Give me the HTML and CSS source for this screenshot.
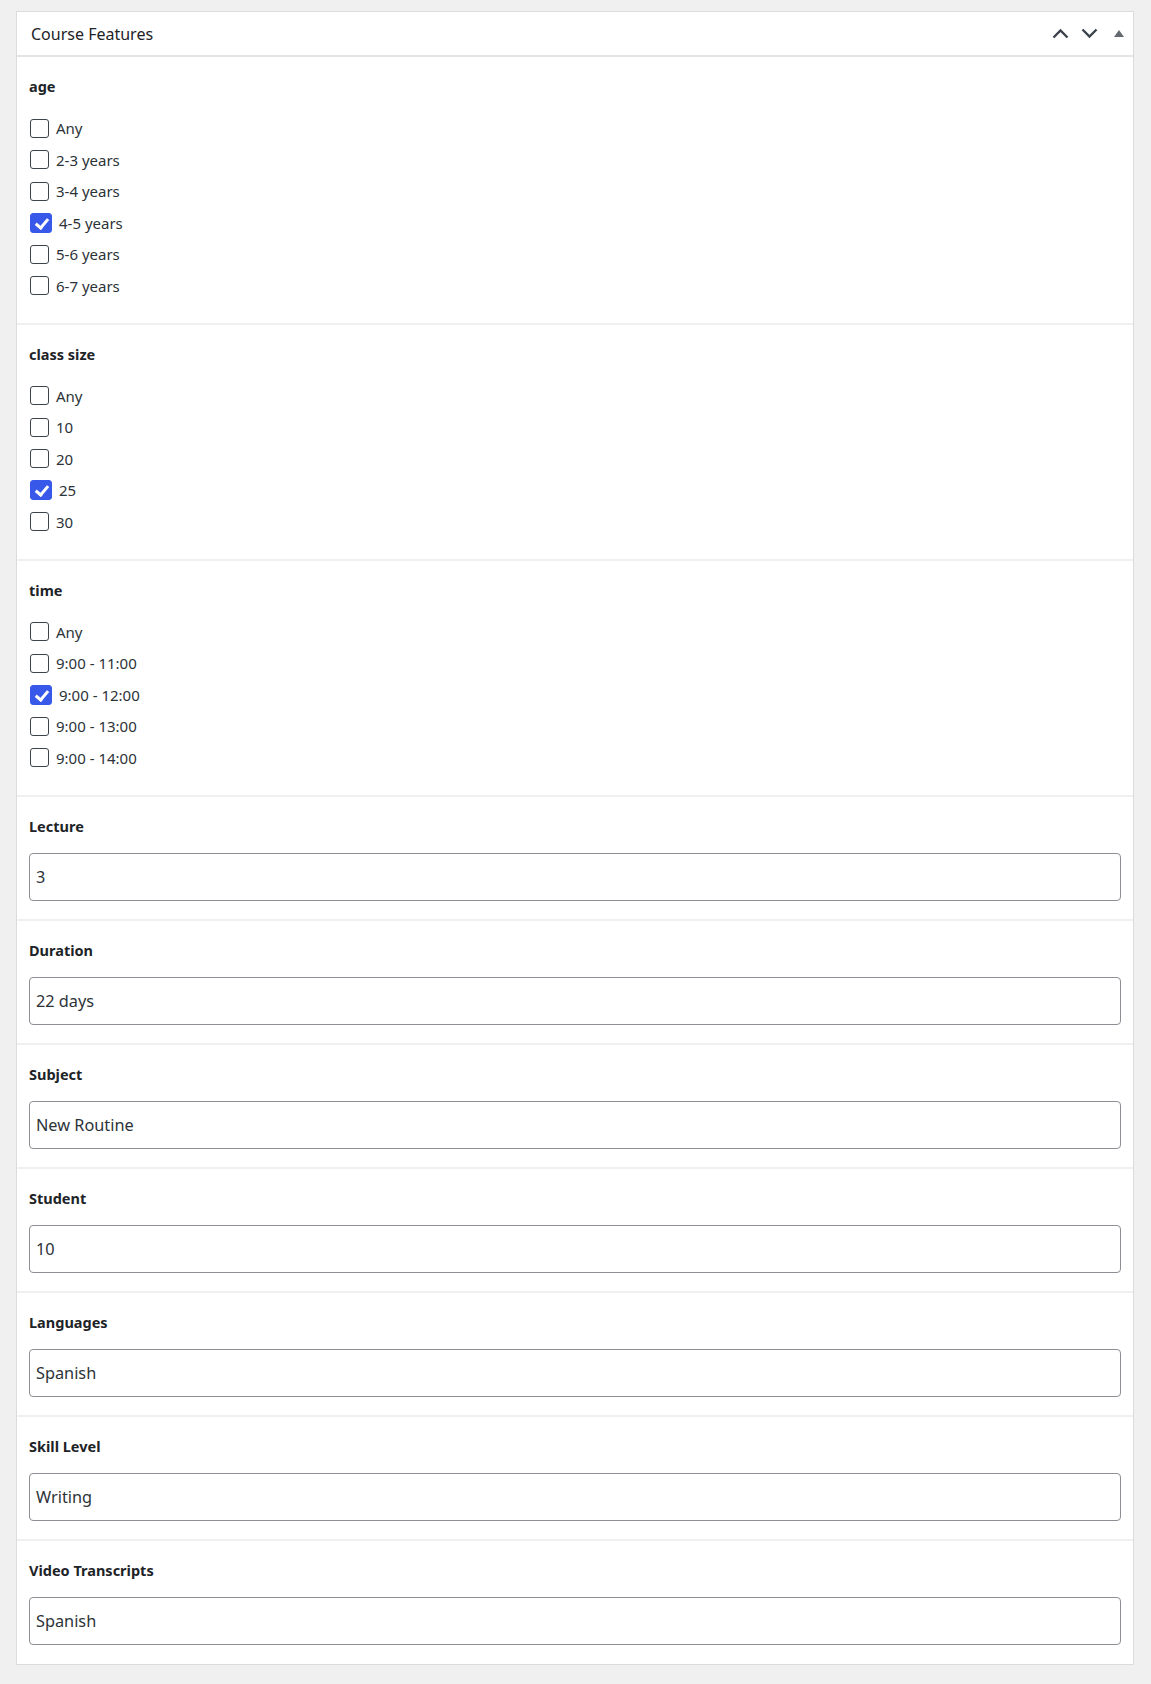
FILE: index.html
```html
<!DOCTYPE html>
<html lang="en">
  <head>
    <meta charset="UTF-8" />
    <meta name="viewport" content="width=device-width, initial-scale=1.0" />
    <title>Course Features</title>
    <link rel="stylesheet" href="styles.css">
  </head>
  <body>
    <div class="postbox">
      <div class="postbox-header">
        <h2 class="hndle">Course Features</h2>
        <div class="handle-actions">
          <button class="handle-btn" aria-label="Move up">
            <svg width="17" height="11" viewBox="0 0 17 11"><path d="M1.5 9.5 L8.5 2.5 L15.5 9.5" fill="none" stroke="#3c434a" stroke-width="2.4" /></svg>
          </button>
          <button class="handle-btn" aria-label="Move down">
            <svg width="17" height="11" viewBox="0 0 17 11"><path d="M1.5 1.5 L8.5 8.5 L15.5 1.5" fill="none" stroke="#3c434a" stroke-width="2.4" /></svg>
          </button>
          <button class="handle-btn toggle" aria-label="Toggle panel">
            <svg width="10" height="7" viewBox="0 0 10 7"><polygon points="0,7 5,0 10,7" fill="#646970" /></svg>
          </button>
        </div>
      </div>

      <div class="field">
        <div class="field-label">age</div>
        <div class="checks">
          <label class="check"><input type="checkbox" /> Any</label>
          <label class="check"><input type="checkbox" /> 2-3 years</label>
          <label class="check"><input type="checkbox" /> 3-4 years</label>
          <label class="check"><input type="checkbox" checked /> 4-5 years</label>
          <label class="check"><input type="checkbox" /> 5-6 years</label>
          <label class="check"><input type="checkbox" /> 6-7 years</label>
        </div>
      </div>

      <div class="field">
        <div class="field-label">class size</div>
        <div class="checks">
          <label class="check"><input type="checkbox" /> Any</label>
          <label class="check"><input type="checkbox" /> 10</label>
          <label class="check"><input type="checkbox" /> 20</label>
          <label class="check"><input type="checkbox" checked /> 25</label>
          <label class="check"><input type="checkbox" /> 30</label>
        </div>
      </div>

      <div class="field">
        <div class="field-label">time</div>
        <div class="checks">
          <label class="check"><input type="checkbox" /> Any</label>
          <label class="check"><input type="checkbox" /> 9:00 - 11:00</label>
          <label class="check"><input type="checkbox" checked /> 9:00 - 12:00</label>
          <label class="check"><input type="checkbox" /> 9:00 - 13:00</label>
          <label class="check"><input type="checkbox" /> 9:00 - 14:00</label>
        </div>
      </div>

      <div class="field text-field">
        <div class="field-label">Lecture</div>
        <input class="text-input" type="text" value="3" />
      </div>

      <div class="field text-field">
        <div class="field-label">Duration</div>
        <input class="text-input" type="text" value="22 days" />
      </div>

      <div class="field text-field">
        <div class="field-label">Subject</div>
        <input class="text-input" type="text" value="New Routine" />
      </div>

      <div class="field text-field">
        <div class="field-label">Student</div>
        <input class="text-input" type="text" value="10" />
      </div>

      <div class="field text-field">
        <div class="field-label">Languages</div>
        <input class="text-input" type="text" value="Spanish" />
      </div>

      <div class="field text-field">
        <div class="field-label">Skill Level</div>
        <input class="text-input" type="text" value="Writing" />
      </div>

      <div class="field text-field">
        <div class="field-label">Video Transcripts</div>
        <input class="text-input" type="text" value="Spanish" />
      </div>
    </div>
  </body>
</html>
```

FILE: styles.css
```css
* {
  box-sizing: border-box;
}

body {
  margin: 0;
  padding: 11px 0 0 16px;
  background-color: #f0f0f1;
  font-family: "Noto Sans", "Open Sans", sans-serif;
  color: #1d2327;
}

.postbox {
  width: 1118px;
  background-color: #fff;
  border: 1px solid #dcdcde;
}

/* header bar with the move / toggle buttons */
.postbox-header {
  display: flex;
  justify-content: space-between;
  align-items: center;
  height: 45px;
  border-bottom: 2px solid #e4e4e6;
  padding: 0 9px 0 14px;
}

.hndle {
  margin: 0;
  font-size: 16px;
  font-weight: 400;
  color: #1d2327;
}

.handle-actions {
  display: flex;
  align-items: center;
}

.handle-btn {
  display: flex;
  align-items: center;
  justify-content: center;
  padding: 0;
  margin: 0;
  border: none;
  background: none;
  cursor: pointer;
}

.handle-btn + .handle-btn {
  margin-left: 12px;
}

.handle-btn.toggle {
  margin-left: 16px;
}

.field {
  padding: 19px 12px 27px;
  border-bottom: 2px solid #f0f0f1;
}

.field:last-child {
  border-bottom: none;
  padding-bottom: 19px;
}

.field-label {
  font-size: 14.5px;
  font-weight: 700;
  line-height: 20px;
  margin-bottom: 22px;
}

.checks {
  display: flex;
  flex-direction: column;
  gap: 11.5px;
}

.check {
  display: flex;
  align-items: center;
  gap: 7px;
  height: 20px;
  padding-left: 1px;
  font-size: 15px;
  color: #2c3338;
}

.check input {
  appearance: none;
  -webkit-appearance: none;
  margin: 0;
  width: 19px;
  height: 19px;
  border: 1px solid #3c434a;
  border-radius: 3px;
  background: #fff;
  position: relative;
  flex-shrink: 0;
}

.check input:checked {
  width: 22px;
  height: 20px;
  border-color: #3858e9;
  background-color: #3858e9;
}

/* white tick inside a checked box */
.check input:checked::after {
  content: "";
  position: absolute;
  left: 7px;
  top: 2px;
  width: 5px;
  height: 10px;
  border: solid #fff;
  border-width: 0 3px 3px 0;
  transform: rotate(40deg);
}

.text-field {
  padding-bottom: 18px;
}

.text-field .field-label {
  margin-bottom: 17px;
}

.text-input {
  display: block;
  width: 100%;
  height: 48px;
  padding: 0 6px;
  border: 1px solid #8c8f94;
  border-radius: 4px;
  font-family: "Noto Sans", "Open Sans", sans-serif;
  font-size: 16.3px;
  color: #2c3338;
  background: #fff;
}
```
